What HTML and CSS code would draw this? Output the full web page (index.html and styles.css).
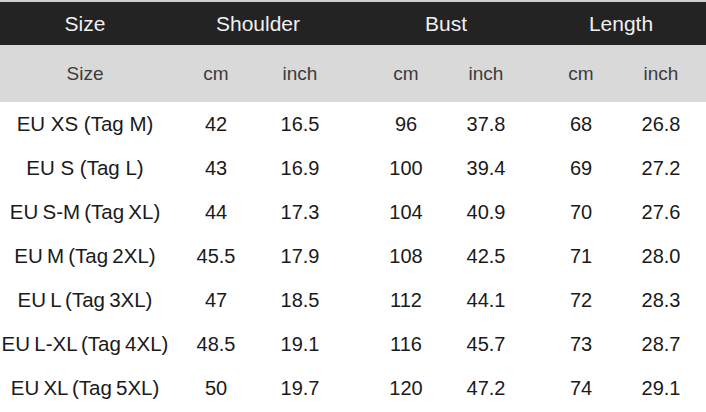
FILE: index.html
```html
<!DOCTYPE html>
<html>
<head>
<meta charset="utf-8">
<link rel="stylesheet" href="styles.css">
</head>
<body>
<div class="chart">
  <div class="row head">
    <div class="c size">Size</div>
    <div class="c grp g1">Shoulder</div>
    <div class="c grp g2">Bust</div>
    <div class="c grp g3">Length</div>
  </div>
  <div class="row sub">
    <div class="c size">Size</div>
    <div class="c">cm</div><div class="c">inch</div>
    <div class="c b1">cm</div><div class="c">inch</div>
    <div class="c l1">cm</div><div class="c l2">inch</div>
  </div>
  <div class="row data">
    <div class="c size label">EU XS (Tag M)</div>
    <div class="c">42</div><div class="c">16.5</div>
    <div class="c b1">96</div><div class="c">37.8</div>
    <div class="c l1">68</div><div class="c l2">26.8</div>
  </div>
  <div class="row data">
    <div class="c size label">EU S (Tag L)</div>
    <div class="c">43</div><div class="c">16.9</div>
    <div class="c b1">100</div><div class="c">39.4</div>
    <div class="c l1">69</div><div class="c l2">27.2</div>
  </div>
  <div class="row data">
    <div class="c size label tight">EU S-M (Tag XL)</div>
    <div class="c">44</div><div class="c">17.3</div>
    <div class="c b1">104</div><div class="c">40.9</div>
    <div class="c l1">70</div><div class="c l2">27.6</div>
  </div>
  <div class="row data">
    <div class="c size label tight">EU M (Tag 2XL)</div>
    <div class="c">45.5</div><div class="c">17.9</div>
    <div class="c b1">108</div><div class="c">42.5</div>
    <div class="c l1">71</div><div class="c l2">28.0</div>
  </div>
  <div class="row data">
    <div class="c size label tight">EU L (Tag 3XL)</div>
    <div class="c">47</div><div class="c">18.5</div>
    <div class="c b1">112</div><div class="c">44.1</div>
    <div class="c l1">72</div><div class="c l2">28.3</div>
  </div>
  <div class="row data">
    <div class="c size label tight">EU L-XL (Tag 4XL)</div>
    <div class="c">48.5</div><div class="c">19.1</div>
    <div class="c b1">116</div><div class="c">45.7</div>
    <div class="c l1">73</div><div class="c l2">28.7</div>
  </div>
  <div class="row data">
    <div class="c size label tight">EU XL (Tag 5XL)</div>
    <div class="c">50</div><div class="c">19.7</div>
    <div class="c b1">120</div><div class="c">47.2</div>
    <div class="c l1">74</div><div class="c l2">29.1</div>
  </div>
</div>
</body>
</html>
```

FILE: styles.css
```css
html, body {
  margin: 0;
  padding: 0;
  background: #ffffff;
}
body {
  font-family: "Liberation Sans", Arial, sans-serif;
  width: 706px;
  height: 412px;
  overflow: hidden;
}
.chart {
  border-top: 2px solid #cfcfcf;
}
.row {
  display: grid;
  grid-template-columns: 174px 84px 84px 104px 80px 95px 85px;
  align-items: center;
}
.c {
  text-align: center;
  white-space: nowrap;
}
.size {
  padding-right: 4px;
}
.b1 {
  padding-left: 24px;
}
.l1 {
  padding-left: 15px;
}
.l2 {
  padding-right: 5px;
}
.head {
  height: 43px;
  background: #232323;
  color: #f0f0f0;
  font-size: 21px;
  grid-template-columns: 174px 168px 184px 180px;
}
.head .g2 {
  padding-left: 24px;
}
.head .g3 {
  padding-left: 15px;
  padding-right: 5px;
}
.sub {
  height: 57px;
  background: #d9d9d9;
  color: #3c3c3c;
  font-size: 19px;
}
.data {
  height: 44px;
  color: #1a1a1a;
  font-size: 20px;
}
.label {
  font-size: 20.5px;
}
.tight {
  word-spacing: -1.5px;
}
```
